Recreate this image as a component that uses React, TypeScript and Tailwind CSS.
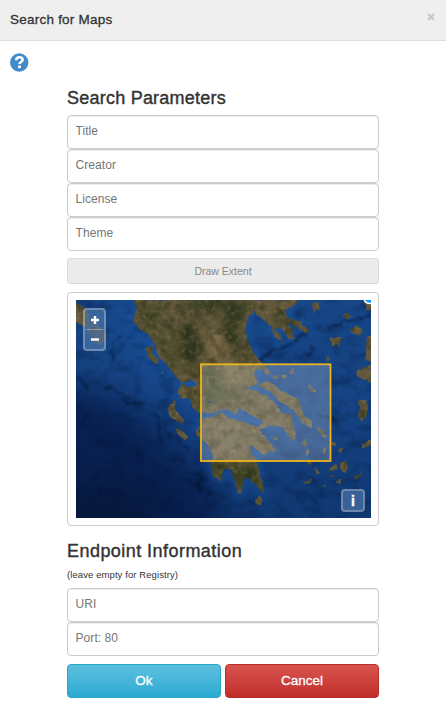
import React from "react";

const mainland =
  "M58,0 61,10 57,20 62,27 73,35 80,45 82,55 90,63 97,73 103,80 107,83 104,88 102,93 107,98 114,98 117,108 122,112 137,113 148,109 161,113 163,108 172,113 180,117 188,122 187,125 180,127 167,122 153,118 144,113 133,118 127,118 124,128 120,133 125,139 131,143 134,149 138,157 135,163 138,175 145,181 147,170 153,168 158,177 162,192 165,193 167,180 172,177 178,183 187,193 188,190 185,180 180,160 175,152 173,145 180,148 188,155 192,152 200,151 193,142 187,135 183,129 190,127 197,125 207,127 213,136 218,141 219,135 217,123 215,115 205,113 200,105 192,97 180,91 168,88 177,86 182,82 178,75 180,69 187,69 190,75 195,73 188,65 180,57 176,50 171,40 169,27 172,17 179,10 181,15 191,22 196,27 199,37 207,42 204,36 197,28 206,28 212,38 218,39 216,30 211,23 221,27 231,33 232,30 224,22 212,18 209,10 221,3 222,0Z";

const islands = [
  "M0,3 7,7 20,23 28,32 29,38 25,45 15,40 11,27 0,22Z",
  "M182,85 192,81 200,87 207,92 223,100 225,108 227,115 237,122 235,128 227,123 220,113 215,108 205,102 195,92Z",
  "M69,49 77,46 76,53 82,60 81,64 74,59Z",
  "M92,108 99,101 99,110 108,120 106,123 94,117Z",
  "M101,129 106,131 112,137 109,140 102,134Z",
  "M122,128 126,124 127,133 120,131Z",
  "M180,198 184,196 186,201 184,206 180,203Z",
  "M236,4 242,2 244,9 238,11Z",
  "M267,15 272,13 275,17 270,19Z",
  "M275,30 280,26 286,29 285,34 276,33Z",
  "M254,38 266,37 263,46 259,44 257,47Z",
  "M291,38 295,36 295,62 290,59Z",
  "M288,0 295,0 295,10 290,9Z",
  "M281,71 289,67 295,65 295,82 287,79 281,76Z",
  "M281,101 289,100 292,106 290,117 285,120 282,114 285,108Z",
  "M287,144 295,140 295,145 286,148Z",
  "M251,58 253,57 252,61Z",
  "M197,76 202,75 202,79 198,78Z",
  "M205,76 210,74 210,79 207,78Z",
  "M214,73 217,69 217,73Z",
  "M233,84 236,87 240,92 236,92 233,87Z",
  "M241,127 247,130 251,137 249,139 244,134Z",
  "M226,143 229,139 231,142 229,146 227,146Z",
  "M230,151 232,148 233,154 231,156Z",
  "M247,149 250,147 249,153 247,153Z",
  "M255,142 260,143 259,146 256,145Z",
  "M262,149 267,148 265,152 263,152Z",
  "M253,169 260,164 261,168 257,171Z",
  "M265,163 270,161 272,168 268,173 264,168Z",
  "M278,177 287,173 281,179Z",
  "M228,183 236,179 234,183 229,184Z",
  "M239,167 243,173 241,174Z",
  "M260,181 265,179 264,184Z",
  "M247,186 249,185 250,187Z",
  "M230,162 236,162 234,165Z",
  "M198,137 202,136 201,140 198,139Z",
  "M254,177 258,175 257,177Z",
  "M86,72 88,73 86,74Z",
].join(" ");

function MapView() {
  return (
    <svg className="block h-[218px] w-[295px]" viewBox="0 0 295 218">
      <defs>
        <linearGradient id="sea" x1="0" y1="0" x2="0" y2="1">
          <stop offset="0" stopColor="#164686" />
          <stop offset="0.5" stopColor="#154282" />
          <stop offset="1" stopColor="#103871" />
        </linearGradient>
        <filter id="soft" x="-50%" y="-50%" width="200%" height="200%" colorInterpolationFilters="sRGB">
          <feGaussianBlur stdDeviation="17" />
        </filter>
        <filter id="shelf" x="-20%" y="-20%" width="140%" height="140%" colorInterpolationFilters="sRGB">
          <feGaussianBlur stdDeviation="4" />
        </filter>
        <filter id="blotch" x="-30%" y="-30%" width="160%" height="160%" colorInterpolationFilters="sRGB">
          <feGaussianBlur stdDeviation="4" />
        </filter>
        <filter id="trench" x="-10%" y="-10%" width="120%" height="120%" colorInterpolationFilters="sRGB">
          <feTurbulence type="fractalNoise" baseFrequency="0.12" numOctaves="3" seed="9" />
          <feDisplacementMap in="SourceGraphic" scale="9" xChannelSelector="R" yChannelSelector="G" />
          <feGaussianBlur stdDeviation="0.9" />
        </filter>
        <filter id="waves" x="0" y="0" width="100%" height="100%" colorInterpolationFilters="sRGB">
          <feTurbulence type="fractalNoise" baseFrequency="0.06 0.08" numOctaves="4" seed="8" />
          <feColorMatrix values="0 0 0 0 0.01  0 0 0 0 0.07  0 0 0 0 0.2  2.6 0 0 0 -1.2" />
        </filter>
        <filter id="terrain" x="0" y="0" width="100%" height="100%" colorInterpolationFilters="sRGB">
          <feTurbulence type="fractalNoise" baseFrequency="0.1" numOctaves="4" seed="12" />
          <feColorMatrix values="0 0 0 0 0.13  0 0 0 0 0.16  0 0 0 0 0.07  2.8 0 0 0 -1.2" />
        </filter>
        <filter id="ridges" x="0" y="0" width="100%" height="100%" colorInterpolationFilters="sRGB">
          <feTurbulence type="fractalNoise" baseFrequency="0.2" numOctaves="3" seed="3" />
          <feColorMatrix values="0 0 0 0 0.56  0 0 0 0 0.5  0 0 0 0 0.36  0 2.2 0 0 -1.05" />
        </filter>
        <filter id="coast" x="-5%" y="-5%" width="110%" height="110%" colorInterpolationFilters="sRGB">
          <feTurbulence type="fractalNoise" baseFrequency="0.25" numOctaves="2" seed="5" />
          <feDisplacementMap in="SourceGraphic" scale="3" xChannelSelector="R" yChannelSelector="G" />
          <feGaussianBlur stdDeviation="0.4" />
        </filter>
        <mask id="landMask" maskUnits="userSpaceOnUse" x="0" y="0" width="295" height="218">
          <path d={mainland + islands} fill="white" stroke="white" strokeWidth="0.6" filter="url(#coast)" />
        </mask>
      </defs>
      <rect width="295" height="218" fill="url(#sea)" />
      <g filter="url(#soft)">
        <path d="M-40 80 25 92 70 117 100 150 135 180 165 260 -40 260Z" fill="#082050" />
        <path d="M-30 185 45 180 90 200 60 260 -30 260Z" fill="#07193f" />
        <path d="M30 -10 65 0 100 75 95 95 60 60Z" fill="#194e96" />
      </g>
      <path d={mainland} fill="none" stroke="#1d56a0" strokeWidth="7" opacity="0.6" filter="url(#shelf)" />
      <rect width="295" height="218" filter="url(#waves)" opacity="0.33" />
      <g fill="none" stroke="#04122e" strokeLinecap="round" opacity="0.6" filter="url(#trench)">
        <path d="M28 87l9 1 4 5 12 4M47 101l12 4 5-3M78 113l6 6-3 8 5 14M112 172l16 5-9 7 15 9M123 190l8 11M0 77l10 10M182 61l14-10 20-7 14-12M238 48l-9 9M252 28l17-7 24-5" strokeWidth="2.4" />
        <path d="M88 132l12 4 15 17M94 158l15 6M110 179l12 10 20 4M207 189l23 4 14 12M242 114l18 7M16 199l10-10M62 150l5 14M36 60l2-18 5-7M6 122l9-8" strokeWidth="1.5" />
      </g>
      <g mask="url(#landMask)">
        <rect width="295" height="218" fill="#62573a" />
        <g filter="url(#blotch)">
          <path d="M58 0 100 0 85 22 103 50 116 60 112 78 88 57 65 28Z" fill="#504e2e" />
          <path d="M102 25 116 20 127 48 118 68 107 55Z" fill="#28321a" opacity="0.85" />
          <path d="M108 -4 150 -4 142 10 112 12Z" fill="#303b20" opacity="0.7" />
          <path d="M147 0 175 4 160 24 168 51 181 64 171 62 149 38Z" fill="#27341b" opacity="0.85" />
          <path d="M127 35 144 32 156 62 137 60Z" fill="#7d6a47" />
          <path d="M125 65 143 67 152 98 126 110Z" fill="#3c4425" opacity="0.85" />
          <path d="M145 65 177 64 170 80 150 82Z" fill="#6e623e" />
          <path d="M150 84 175 90 170 104 152 104Z" fill="#454a2a" opacity="0.6" />
          <path d="M127 120 165 124 172 150 140 156Z" fill="#655b42" />
          <path d="M132 160 146 160 157 168 180 162 187 190 163 190 140 176Z" fill="#353b1d" opacity="0.8" />
          <path d="M209 17 233 31 210 29 190 12Z" fill="#303b20" opacity="0.7" />
        </g>
        <rect width="295" height="218" filter="url(#terrain)" opacity="0.48" />
        <rect width="295" height="218" filter="url(#ridges)" opacity="0.45" />
      </g>
      <path d="M106 82l7 0 2-3 3 3 3 2-4 3-7-1Z" fill="#19519c" />
      <path d="M130 101l4 0 3 2-6-1Z" fill="#172b48" />
      <rect x="125" y="64.3" width="129.5" height="96.7" fill="#ffffff" fillOpacity="0.22" stroke="#edb51d" strokeWidth="1.8" />
      <circle cx="293.5" cy="-2" r="5.5" fill="#0099ff" stroke="white" strokeWidth="1.5" />
    </svg>
  );
}

function Field({ label }: { label: string }) {
  return (
    <input
      aria-label={label}
      placeholder={label}
      className="block h-[34px] w-full rounded-[4px] border border-[#ccc] bg-white px-[7.5px] pb-[3px] text-[12px] tracking-[0.07px] text-[#555] shadow-[inset_0_1px_1px_rgba(0,0,0,0.075)] outline-none placeholder:text-[#757575] placeholder:opacity-100"
    />
  );
}

export default function App() {
  return (
    <main className="h-[727px] w-full overflow-hidden bg-white font-['Liberation_Sans',Arial,sans-serif] text-[#333]">
      <header className="flex h-[41px] items-start justify-between border-b border-[#ddd] bg-[#efefef] pl-[10px] pr-[11px]">
        <h1 className="pt-[10px] text-[13.5px] leading-5 tracking-[0.23px] [-webkit-text-stroke:0.3px_#333]">Search for Maps</h1>
        <button aria-label="Close" className="pt-[13px]">
          <svg className="block size-2" viewBox="0 0 8 8">
            <path d="M1 1l6 6M7 1L1 7" stroke="#c4c4c4" strokeWidth="1.9" />
          </svg>
        </button>
      </header>
      <div className="h-[45px] pl-[10px] pt-[12px]">
        <svg className="block size-[19px]" viewBox="0 0 19 19">
          <circle cx="9.25" cy="9.5" r="9.2" fill="#428bca" />
          <path d="M6.3 7.2C6.4 5 7.6 4.3 9.4 4.3c2 0 3.2 1 3.2 2.5 0 2.3-3.1 2.1-3.1 4.3" fill="none" stroke="white" strokeWidth="2.6" />
          <path d="M8.1 12.5h2.8v2.7H8.1z" fill="white" />
        </svg>
      </div>
      <form className="mx-auto w-[312px]">
        <h2 className="h-[29px] text-[18px] leading-[24px] tracking-[0.23px] [-webkit-text-stroke:0.4px_#333]">Search Parameters</h2>
        <Field label="Title" />
        <Field label="Creator" />
        <Field label="License" />
        <Field label="Theme" />
        <button type="button" className="mt-[7px] block h-[26px] w-full rounded-[3px] border border-[#dcdcdc] bg-[#ebebeb] pt-[2px] text-[10.5px] text-[#888]">
          Draw Extent
        </button>
        <div className="relative mt-2 h-[234px] rounded-[4px] border border-[#ccc] px-2 pt-[7px]">
          <MapView />
          <div className="absolute left-[15px] top-[15px] flex h-[43px] w-[23px] flex-col gap-px rounded-[4px] bg-white/40 p-[2px]">
            <button type="button" aria-label="Zoom in" className="flex flex-1 items-center justify-center rounded-t-[2px] bg-[#003c88]/50">
              <svg className="size-2" viewBox="0 0 8 8"><path d="M4 0v8M0 4h8" stroke="white" strokeWidth="2.4" /></svg>
            </button>
            <button type="button" aria-label="Zoom out" className="flex flex-1 items-center justify-center rounded-b-[2px] bg-[#003c88]/50">
              <svg className="size-2" viewBox="0 0 8 8"><path d="M0 3.5h8" stroke="white" strokeWidth="2.4" /></svg>
            </button>
          </div>
          <div className="absolute bottom-[13px] right-[13px] h-[23px] w-6 rounded-[4px] bg-white/40 p-[2px]">
            <button type="button" className="flex size-full items-center justify-center rounded-[2px] bg-[#003c88]/50 text-[14px] font-bold leading-none text-white [-webkit-text-stroke:0.4px_white]">i</button>
          </div>
        </div>
        <h2 className="mt-[13px] text-[18px] leading-[24px] tracking-[0.45px] [-webkit-text-stroke:0.4px_#333]">Endpoint Information</h2>
        <p className="h-[25px] pt-[5px] text-[9.5px] leading-[14px] tracking-[0.09px]">(leave empty for Registry)</p>
        <Field label="URI" />
        <Field label="Port: 80" />
        <div className="mt-2 flex gap-1">
          <button type="button" className="h-[34px] flex-1 rounded-[4px] border border-[#28a4c9] bg-linear-to-b from-[#5bc0de] to-[#2aabd2] pt-px text-[13.5px] text-white [-webkit-text-stroke:0.3px_white]">Ok</button>
          <button type="button" className="h-[34px] flex-1 rounded-[4px] border border-[#b92c28] bg-linear-to-b from-[#d9534f] to-[#c12e2a] pt-px text-[13.5px] text-white [-webkit-text-stroke:0.3px_white]">Cancel</button>
        </div>
      </form>
    </main>
  );
}
